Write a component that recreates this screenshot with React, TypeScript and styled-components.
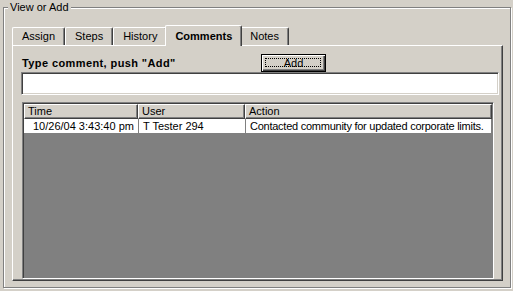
import React from 'react';
import styled, { createGlobalStyle } from 'styled-components';

const FACE = '#D4D0C8';
const SHADOW = '#808080';
const DARK = '#404040';
const LIGHT = '#FFFFFF';

const Global = createGlobalStyle`
  html, body { margin: 0; padding: 0; background: ${FACE}; }
  body {
    font-family: "Liberation Sans", Arial, sans-serif;
    font-size: 11px;
    color: #000;
  }
  * { box-sizing: border-box; }
`;

const Screen = styled.div`
  width: 513px;
  height: 291px;
  padding: 7px 3px 0 3px;
  background: ${FACE};
  overflow: hidden;
`;

const GroupBox = styled.section`
  position: relative;
  width: 508px;
  height: 281px;
  border: 1px solid ${SHADOW};
  box-shadow: inset 1px 1px 0 ${LIGHT}, 1px 1px 0 ${LIGHT};
  padding: 17px 7px 6px 8px;
  display: flex;
  flex-direction: column;
`;

const Caption = styled.span`
  position: absolute;
  top: -7px;
  left: 4px;
  padding: 0 2px;
  line-height: 13px;
  background: ${FACE};
`;

const TabStrip = styled.div`
  display: flex;
  align-items: flex-end;
  height: 20px;
`;

const Tab = styled.div<{ $active?: boolean }>`
  position: relative;
  z-index: ${p => (p.$active ? 2 : 1)};
  height: ${p => (p.$active ? 21 : 18)}px;
  margin: 0 ${p => (p.$active ? '-2px' : '0')} ${p => (p.$active ? '-1px' : '0')};
  padding: ${p => (p.$active ? '2px 9px 0' : '0 9px')};
  border-top: 1px solid ${LIGHT};
  border-left: 1px solid ${LIGHT};
  border-right: 1px solid ${DARK};
  border-radius: 2px 2px 0 0;
  box-shadow: inset -1px 0 0 ${SHADOW};
  background: ${FACE};
  font-weight: ${p => (p.$active ? 'bold' : 'normal')};
  line-height: 16px;
  white-space: nowrap;
`;

const Panel = styled.div`
  flex: 1;
  display: flex;
  flex-direction: column;
  border: 1px solid;
  border-color: ${LIGHT} ${DARK} ${DARK} ${LIGHT};
  box-shadow: inset -1px -1px 0 ${SHADOW};
  padding: 8px 3px 1px 8px;
`;

const TopRow = styled.div`
  display: grid;
  grid-template-columns: 240px 65px;
  height: 18px;
`;

const Label = styled.div`
  font-weight: bold;
  line-height: 18px;
  padding-left: 1px;
  letter-spacing: 0.4px;
  white-space: nowrap;
`;

const Button = styled.button`
  position: relative;
  width: 65px;
  height: 18px;
  padding: 0;
  border: 1px solid #000;
  background: ${FACE};
  box-shadow: inset 1px 1px 0 ${LIGHT}, inset -1px -1px 0 ${DARK}, inset -2px -2px 0 ${SHADOW};
  font: inherit;
  color: #000;
  line-height: 15px;
  &::after {
    content: '';
    position: absolute;
    inset: 3px 4px 4px 3px;
    border: 1px dotted #000;
  }
`;

const TextBox = styled.div`
  height: 23px;
  border: 1px solid;
  border-color: ${SHADOW} ${LIGHT} ${LIGHT} ${SHADOW};
  box-shadow: inset 1px 1px 0 ${DARK}, inset -1px -1px 0 ${FACE};
  background: #fff;
`;

const ListView = styled.div`
  flex: 1;
  margin: 7px 5px 0 1px;
  border: 1px solid;
  border-color: ${SHADOW} ${LIGHT} ${LIGHT} ${SHADOW};
  box-shadow: inset 1px 1px 0 ${DARK};
  padding: 1px 1px 0 1px;
  background: ${SHADOW};
`;

const COLS = '114px 107px 1fr';

const HeaderRow = styled.div`
  display: grid;
  grid-template-columns: ${COLS};
  height: 15px;
`;

const HeaderCell = styled.div`
  border: 1px solid;
  border-color: ${LIGHT} ${DARK} ${DARK} ${LIGHT};
  box-shadow: inset -1px -1px 0 ${SHADOW};
  background: ${FACE};
  padding-left: 3px;
  line-height: 12px;
  white-space: nowrap;
  overflow: hidden;
`;

const DataRow = styled.div`
  display: grid;
  grid-template-columns: ${COLS};
  height: 14px;
  background: #fff;
  margin-right: 1px;
`;

const DataCell = styled.div<{ $indent?: number; $first?: boolean; $tight?: boolean }>`
  padding-left: ${p => p.$indent ?? 4}px;
  border-left: ${p => (p.$first ? 'none' : `1px solid ${SHADOW}`)};
  line-height: 14px;
  letter-spacing: ${p => (p.$tight ? '-0.25px' : 'normal')};
  white-space: nowrap;
  overflow: hidden;
`;

const tabs = ['Assign', 'Steps', 'History', 'Comments', 'Notes'];

export default function App() {
  return (
    <>
      <Global />
      <Screen>
        <GroupBox>
          <Caption>View or Add</Caption>
          <TabStrip>
            {tabs.map(t => (
              <Tab key={t} $active={t === 'Comments'}>
                {t}
              </Tab>
            ))}
          </TabStrip>
          <Panel>
            <TopRow>
              <Label>Type comment, push "Add"</Label>
              <Button>Add</Button>
            </TopRow>
            <TextBox />
            <ListView>
              <HeaderRow>
                <HeaderCell>Time</HeaderCell>
                <HeaderCell>User</HeaderCell>
                <HeaderCell>Action</HeaderCell>
              </HeaderRow>
              <DataRow>
                <DataCell $first $indent={9}>10/26/04 3:43:40 pm</DataCell>
                <DataCell>T Tester 294</DataCell>
                <DataCell $tight>Contacted community for updated corporate limits.</DataCell>
              </DataRow>
            </ListView>
          </Panel>
        </GroupBox>
      </Screen>
    </>
  );
}
